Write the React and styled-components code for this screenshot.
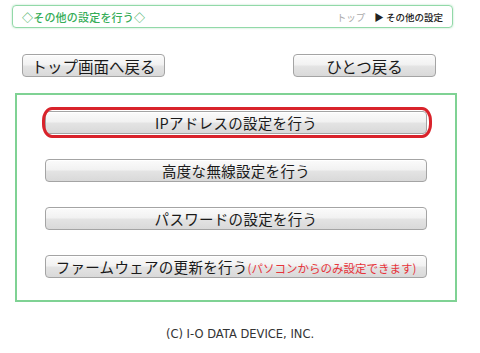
import styled, { createGlobalStyle } from "styled-components";

const GlobalStyle = createGlobalStyle`
  html, body {
    margin: 0;
    padding: 0;
    background: #fff;
  }
  body {
    font-family: "Noto Sans CJK JP", "Noto Sans", sans-serif;
    color: #222;
  }
`;

const menuItems = [
  { id: "ip", label: "IPアドレスの設定を行う", marked: true },
  { id: "wireless", label: "高度な無線設定を行う" },
  { id: "password", label: "パスワードの設定を行う" },
  {
    id: "firmware",
    label: "ファームウェアの更新を行う",
    note: "(パソコンからのみ設定できます)",
  },
];

const App = () => {
  return (
    <Page>
      <GlobalStyle />

      <TitleBar>
        <Title>◇その他の設定を行う◇</Title>
        <Breadcrumb>
          <Crumb>トップ</Crumb>
          <Current>▶ その他の設定</Current>
        </Breadcrumb>
      </TitleBar>

      <NavRow>
        <NavButton>トップ画面へ戻る</NavButton>
        <NavButton>ひとつ戻る</NavButton>
      </NavRow>

      <MenuBox>
        {menuItems.map((item) => (
          <MenuSlot key={item.id}>
            <MenuButton>
              {item.label}
              {item.note && <Note>{item.note}</Note>}
            </MenuButton>
            {item.marked && <Highlight />}
          </MenuSlot>
        ))}
      </MenuBox>

      <Footer>(C) I-O DATA DEVICE, INC.</Footer>
    </Page>
  );
};

const Page = styled.div`
  width: 480px;
  height: 353px;
  padding-top: 5px;
  box-sizing: border-box;
  overflow: hidden;
`;

const TitleBar = styled.div`
  display: flex;
  align-items: center;
  justify-content: space-between;
  margin-left: 12px;
  width: 441px;
  height: 23px;
  box-sizing: border-box;
  padding: 0 9px 0 9px;
  border: 1px solid #92d9a8;
  border-radius: 4px;
  box-shadow: 0 0 2px rgba(110, 200, 140, 0.6);
`;

const Title = styled.span`
  font-size: 11px;
  font-weight: 500;
  color: #36ad58;
  letter-spacing: 0.2px;
`;

const Breadcrumb = styled.span`
  display: flex;
  gap: 9px;
  font-size: 9.5px;
`;

const Crumb = styled.span`
  color: #aaa;
`;

const Current = styled.span`
  color: #222;
  font-weight: 500;
`;

const NavRow = styled.div`
  display: flex;
  justify-content: space-between;
  margin: 26px 0 0 22px;
  width: 414px;
`;

const buttonFace = `
  display: flex;
  align-items: center;
  justify-content: center;
  height: 23px;
  box-sizing: border-box;
  border: 1px solid #a4a4a4;
  border-radius: 4px;
  background: linear-gradient(
    to bottom,
    #fbfbfb 0%,
    #f2f2f2 45%,
    #e3e3e3 55%,
    #d9d9d9 100%
  );
  box-shadow: inset 0 1px 0 #fff;
  color: #1a1a1a;
  font-family: "Noto Sans CJK JP", sans-serif;
  white-space: nowrap;
`;

const NavButton = styled.div`
  ${buttonFace}
  width: 143px;
  font-size: 15.5px;
`;

const MenuBox = styled.div`
  display: flex;
  flex-direction: column;
  gap: 25px;
  margin: 16px 0 0 15px;
  width: 442px;
  height: 209px;
  box-sizing: border-box;
  padding: 16px 0 0 28px;
  border: 2px solid #7fd294;
`;

const MenuSlot = styled.div`
  position: relative;
  width: 382px;
`;

const MenuButton = styled.div`
  ${buttonFace}
  width: 382px;
  font-size: 14.5px;
  letter-spacing: 0.3px;
`;

const Note = styled.span`
  color: #e6333a;
  font-size: 11.5px;
  letter-spacing: 0;
  margin-top: 2px;
`;

const Highlight = styled.div`
  position: absolute;
  left: -3px;
  right: -5px;
  top: -4px;
  bottom: -4px;
  border: 3px solid #d9232b;
  border-radius: 10px / 14px;
  pointer-events: none;
`;

const Footer = styled.div`
  margin-top: 25px;
  text-align: center;
  font-family: "DejaVu Sans", Verdana, sans-serif;
  font-size: 11.5px;
  color: #333;
`;

export default App;
